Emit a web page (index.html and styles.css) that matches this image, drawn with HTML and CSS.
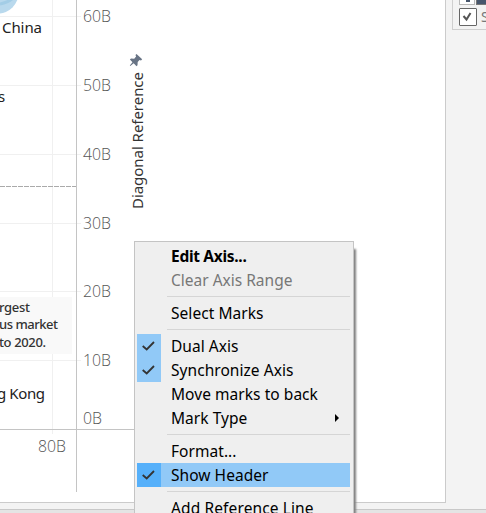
FILE: index.html
```html
<!DOCTYPE html>
<html lang="en">
<head>
<meta charset="utf-8">
<title>Edit Axis</title>
<link rel="stylesheet" href="styles.css">
</head>
<body>
<div class="app">
  <main class="workspace">
    <section class="view">
      <svg class="chart" width="445" height="502" viewBox="0 0 445 502">
        <g class="grid">
          <path d="M0 16.5H81M0 85.5H81M0 154.5H81M0 223.5H81M0 291.5H81M0 360.5H81M52.5 0V434"/>
        </g>
        <circle class="bubble" cx="-2" cy="-7" r="20.500"/>
        <path class="bubble-ring" d="M0 4Q9 2 13 -2"/>
        <path class="average" d="M0 186.500H76"/>
        <path class="axis" d="M76.500 0V492M0 429.500H134"/>
        <g class="ticks">
          <text x="83" y="22" textLength="28" lengthAdjust="spacingAndGlyphs">60B</text>
          <text x="83" y="91" textLength="28" lengthAdjust="spacingAndGlyphs">50B</text>
          <text x="83" y="160" textLength="28" lengthAdjust="spacingAndGlyphs">40B</text>
          <text x="83" y="229" textLength="28" lengthAdjust="spacingAndGlyphs">30B</text>
          <text x="83" y="297" textLength="28" lengthAdjust="spacingAndGlyphs">20B</text>
          <text x="83" y="366" textLength="28" lengthAdjust="spacingAndGlyphs">10B</text>
          <text x="83" y="424" textLength="19" lengthAdjust="spacingAndGlyphs">0B</text>
          <text x="38" y="452" textLength="28" lengthAdjust="spacingAndGlyphs">80B</text>
        </g>
        <g class="marks">
          <text x="2" y="33" textLength="40">China</text>
          <text x="-2" y="102">s</text>
          <text x="-3" y="399" textLength="48">g Kong</text>
        </g>
        <rect class="note-box" x="0" y="297" width="72" height="57"/>
        <g class="note">
          <text x="-1" y="312" textLength="31">rgest</text>
          <text x="-1" y="329" textLength="59">us market</text>
          <text x="-1" y="347" textLength="47">to 2020.</text>
        </g>
        <text class="axis-title" transform="translate(142.500 209) rotate(-90)" textLength="137">Diagonal Reference</text>
        <path class="pin" d="M136.500 54L142.200 59.200L141 60.400L139.500 60L137.700 62L137.500 65.300L136.500 66.200L133.700 63.300L130.300 66L129.800 65.500L132.500 62.200L129.900 59.500L131 58.500L134.200 58.700L136.100 56.600L135.500 55Z"/>
      </svg>
    </section>
    <aside class="side">
      <div class="filter">
        <div class="filter-tools"><span class="tool"><i></i></span><span class="tool tool-active"></span></div>
        <div class="filter-row">
          <span class="box"><svg width="16" height="16" viewBox="0 0 16 16"><path d="M3.500 7L6.500 10.500L10.500 4"/></svg></span>
          <span>S</span>
        </div>
      </div>
    </aside>
  </main>
  <footer class="status"></footer>
</div>
<div class="menu">
  <div class="item strong"><span class="mark"></span><span class="label">Edit Axis...</span></div>
  <div class="item disabled"><span class="mark"></span><span class="label">Clear Axis Range</span></div>
  <hr>
  <div class="item"><span class="mark"></span><span class="label">Select Marks</span></div>
  <hr>
  <div class="item"><span class="mark checked"><svg width="24" height="24" viewBox="0 0 24 24"><path d="M5.700 12L9.700 15.500L17 8"/></svg></span><span class="label">Dual Axis</span></div>
  <div class="item"><span class="mark checked"><svg width="24" height="24" viewBox="0 0 24 24"><path d="M5.700 12L9.700 15.500L17 8"/></svg></span><span class="label">Synchronize Axis</span></div>
  <div class="item"><span class="mark"></span><span class="label">Move marks to back</span></div>
  <div class="item"><span class="mark"></span><span class="label">Mark Type</span><span class="arrow"></span></div>
  <hr>
  <div class="item"><span class="mark"></span><span class="label">Format...</span></div>
  <div class="item active"><span class="mark checked"><svg width="24" height="24" viewBox="0 0 24 24"><path d="M5.700 12L9.700 15.500L17 8"/></svg></span><span class="label">Show Header</span></div>
  <hr>
  <div class="item"><span class="mark"></span><span class="label wide">Add Reference Line</span></div>
</div>
</body>
</html>
```
FILE: styles.css
```css
* { box-sizing: border-box; }
html, body { margin: 0; height: 100%; overflow: hidden; }
body { font-family: "Noto Sans", "Open Sans", sans-serif; background: #f3f3f3; }
.app { display: flex; flex-direction: column; height: 513px; }
.workspace { display: flex; flex: 1; min-height: 0; }
.view { width: 446px; height: 503px; background: #fff; border-right: 1px solid #cbcbcb; border-bottom: 1px solid #cbcbcb; }
.chart { display: block; overflow: hidden; }
.grid path { stroke: #f0f0f0; fill: none; }
.bubble { fill: #b9d9ed; }
.bubble-ring { fill: none; stroke: #a3cde6; stroke-width: 3; }
.average { stroke: #aaa; stroke-dasharray: 5 1; }
.axis { stroke: #c4c4c4; fill: none; }
.ticks { font: 300 16px "Open Sans", sans-serif; fill: #555; }
.marks { font: 15px "Noto Sans", sans-serif; fill: #222; }
.note-box { fill: #f9f9f9; }
.note { font: 500 13px "Noto Sans", sans-serif; fill: #333; }
.axis-title { font: 15px "Noto Sans", sans-serif; fill: #333; }
.pin { fill: #687485; }
.side { flex: 1; padding-left: 6px; overflow: hidden; }
.filter { width: 60px; height: 30px; border-left: 1px solid #cfcfcf; border-bottom: 1px solid #cfcfcf; padding-left: 6px; }
.filter-tools { display: flex; gap: 1px; height: 5px; }
.tool { width: 16px; height: 5px; background: #fff; border: 1px solid #b9b9b9; border-top: 0; }
.tool i { display: block; width: 0; margin-left: 6px; border-top: 2px solid transparent; border-right: 4px solid #47566c; border-top-color: #47566c; }
.tool-active { background: #47566c; border: 1px solid #777; border-top: 0; }
.filter-row { display: flex; align-items: center; gap: 4px; margin-top: 3px; height: 18px; font-size: 14px; line-height: 18px; color: #777; }
.box { width: 18px; height: 18px; border: 1px solid #666; border-radius: 1px; background: #fff; }
.box svg { display: block; }
.box path { fill: none; stroke: #555; stroke-width: 2; }
.status { height: 4px; background: #e4e4e4; border-top: 1px solid #c8c8c8; }
.menu { position: absolute; left: 134px; top: 241px; width: 220px; height: 290px; padding: 2px 3px 2px 2px; background: #efefef; border: 1px solid #c4c4c4; box-shadow: 3px 7px 2px -1px #808080; }
.item { display: flex; align-items: center; height: 24px; font-size: 15.500px; letter-spacing: 0.050px; line-height: 24px; color: #000; white-space: nowrap; }
.mark { width: 24px; height: 24px; margin-right: 10px; }
.mark svg { display: block; }
.mark path { fill: none; stroke: #333; stroke-width: 1.800; }
.checked { background: #91c9f7; }
.active { background: #91c9f7; }
.active .checked { background: #56b0fa; }
.disabled { color: #777; letter-spacing: 0; }
.strong { font-weight: 700; letter-spacing: -0.300px; }
.wide { letter-spacing: 0.120px; }
.menu hr { height: 1px; margin: 4px 0 4px 30px; border: 0; background: #d5d5d5; }
.arrow { margin-left: auto; margin-right: 11px; border-left: 4px solid #000; border-top: 4px solid transparent; border-bottom: 4px solid transparent; }
```
